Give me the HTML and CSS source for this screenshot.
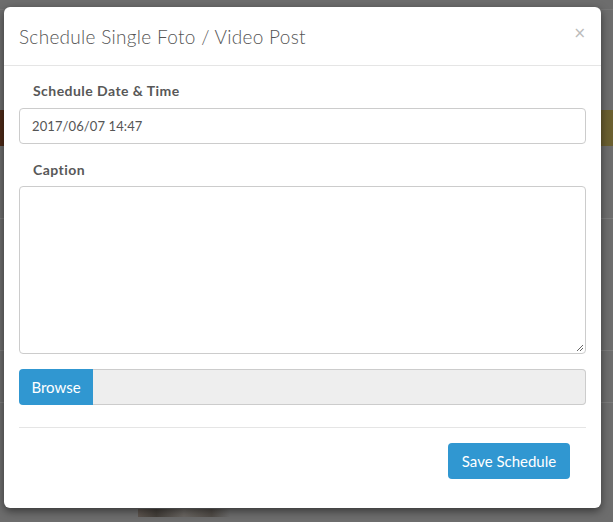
FILE: index.html
```html
<!DOCTYPE html>
<html>
<head>
<meta charset="utf-8">
<link rel="stylesheet" href="styles.css">
</head>
<body>
<div class="backdrop">
  <div class="bg-line bg-line-top"></div>
  <div class="bg-band"></div>
  <div class="bg-line bg-line-1"></div>
  <div class="bg-line bg-line-2"></div>
  <div class="bg-line bg-line-3"></div>
  <div class="bg-img"></div>
</div>
<div class="modal">
  <div class="modal-header">
    <h4 class="modal-title">Schedule Single Foto / Video Post</h4>
    <span class="close">×</span>
  </div>
  <div class="modal-body">
    <label class="label">Schedule Date &amp; Time</label>
    <div class="input">2017/06/07 14:47</div>
    <label class="label label-caption">Caption</label>
    <div class="textarea"><svg class="grip" width="8" height="8" viewBox="0 0 8 8"><path d="M7 1 L1 7 M7 4 L4 7" stroke="#666" stroke-width="1"/></svg></div>
    <div class="file-group">
      <span class="browse">Browse</span>
      <span class="file-field"></span>
    </div>
    <div class="divider"></div>
    <div class="footer">
      <span class="save">Save Schedule</span>
    </div>
  </div>
</div>
</body>
</html>
```
FILE: styles.css
```css
html, body {
  margin: 0;
  padding: 0;
  width: 613px;
  height: 522px;
  overflow: hidden;
}
body {
  background: #6d6d6d;
  font-family: "Lato", "Noto Sans", sans-serif;
  position: relative;
}
.backdrop {
  position: absolute;
  inset: 0;
}
.bg-band {
  position: absolute;
  left: 0;
  right: 0;
  top: 110px;
  height: 36px;
  background: linear-gradient(90deg, #4e2a18 0, #5a3420 30%, #6a5a2c 70%, #6a5f30 100%);
}
.bg-line {
  position: absolute;
  left: 0;
  right: 0;
  height: 1px;
  background: #7b7b7b;
}
.bg-line-top { top: 9px; background: #777; }
.bg-line-1 { top: 218px; }
.bg-line-2 { top: 350px; }
.bg-line-3 { top: 402px; }
.bg-img {
  position: absolute;
  left: 138px;
  top: 509px;
  width: 92px;
  height: 8px;
  background: linear-gradient(90deg, #5a5048 0, #3a342e 20%, #6a6560 50%, #4a443e 80%, #6d6d6d 100%);
  opacity: 0.8;
}
.modal {
  position: absolute;
  left: 4px;
  top: 7px;
  width: 597px;
  height: 501px;
  background: #fff;
  border-radius: 6px;
  box-shadow: 0 3px 9px rgba(0,0,0,0.5);
  box-sizing: border-box;
}
.modal-header {
  height: 59px;
  box-sizing: border-box;
  border-bottom: 1px solid #e5e5e5;
  padding: 0 15px;
  display: flex;
  align-items: center;
  justify-content: space-between;
}
.modal-title {
  margin: 0;
  font-size: 19px;
  font-weight: 300;
  color: #555;
  letter-spacing: 0.3px;
}
.close {
  color: #bbb;
  font-size: 15px;
  margin-right: 0;
  margin-top: -6px;
  font-family: "DejaVu Sans", sans-serif;
}
.modal-body {
  padding: 15px;
  display: flex;
  flex-direction: column;
}
.label {
  display: block;
  padding-left: 14px;
  font-size: 14px;
  line-height: 20px;
  font-weight: 700;
  color: #585858;
  letter-spacing: 0.45px;
  margin-bottom: 7px;
}
.label-caption {
  margin-top: 16px;
  margin-bottom: 6px;
}
.input {
  height: 36px;
  box-sizing: border-box;
  border: 1px solid #ccc;
  border-radius: 4px;
  padding: 0 12px;
  display: flex;
  align-items: center;
  font-size: 13px;
  color: #555;
  letter-spacing: 0.1px;
}
.textarea {
  height: 168px;
  box-sizing: border-box;
  border: 1px solid #ccc;
  border-radius: 4px;
  position: relative;
}
.grip {
  position: absolute;
  right: 1px;
  bottom: 1px;
}
.file-group {
  margin-top: 15px;
  height: 36px;
  display: flex;
}
.browse {
  background: #3097d1;
  color: #fff;
  font-size: 15px;
  width: 74px;
  display: flex;
  align-items: center;
  justify-content: center;
  border-radius: 4px 0 0 4px;
}
.file-field {
  flex: 1;
  background: #eee;
  border: 1px solid #ccc;
  border-left: none;
  border-radius: 0 4px 4px 0;
}
.divider {
  margin-top: 22px;
  height: 1px;
  background: #e5e5e5;
}
.footer {
  display: flex;
  justify-content: flex-end;
  padding-right: 16px;
  margin-top: 15px;
}
.save {
  background: #3097d1;
  color: #fff;
  font-size: 15px;
  height: 36px;
  width: 122px;
  border-radius: 4px;
  display: flex;
  align-items: center;
  justify-content: center;
}
```
